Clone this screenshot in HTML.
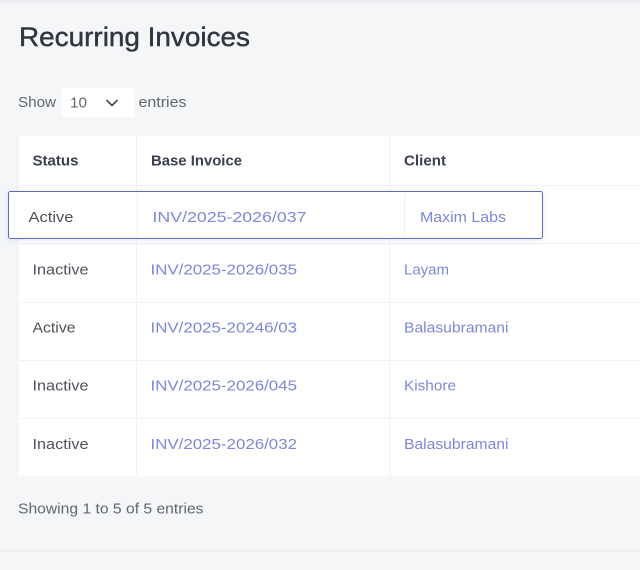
<!DOCTYPE html>
<html lang="en">
<head>
<meta charset="utf-8">
<title>Recurring Invoices</title>
<style>
html,body{margin:0;padding:0;width:640px;height:570px;overflow:hidden;background:#f4f6f8}
svg{display:block}
text{font-family:"Liberation Sans",sans-serif;font-size:15px;fill:#4a4f58}
.h{font-weight:700;fill:#3a404c}
.l{fill:#7d88d6}
.d{fill:#4d5159}
.m{fill:#62676f}
</style>
</head>
<body>
<svg width="640" height="570" viewBox="0 0 640 570" xmlns="http://www.w3.org/2000/svg">
<defs>
<linearGradient id="t" x1="0" y1="0" x2="0" y2="1"><stop offset="0" stop-color="#e6e8eb"/><stop offset="1" stop-color="#f4f6f8"/></linearGradient>
<filter id="s" x="-5%" y="-30%" width="110%" height="160%"><feDropShadow dx="0" dy="1" stdDeviation="3" flood-color="#5a6bbf" flood-opacity=".16"/></filter>
</defs>
<rect width="640" height="570" fill="#f4f6f8"/>
<rect width="640" height="4" fill="url(#t)"/>
<text x="19" y="46" textLength="231" lengthAdjust="spacingAndGlyphs" style="font-size:27px;fill:#2f3743;stroke:#2f3743;stroke-width:.45">Recurring Invoices</text>

<text x="18" y="107" class="m" textLength="38" lengthAdjust="spacingAndGlyphs">Show</text>
<rect x="61.500" y="88" width="72.500" height="29.500" rx="3" fill="#fff"/>
<text x="70" y="107.500" class="m" textLength="17" lengthAdjust="spacingAndGlyphs">10</text>
<path d="M106.500 100 L112 105.500 L117.500 100" fill="none" stroke="#4a4f58" stroke-width="1.800"/>
<text x="138.500" y="107" class="m" textLength="48" lengthAdjust="spacingAndGlyphs">entries</text>

<rect x="19" y="136" width="621" height="340.500" fill="#fff"/>
<g stroke="#f1f2f4" stroke-width="1" fill="none">
<path d="M136.500 136V476M390 136V476"/>
<path d="M19 185.500H640M19 243.500H640M19 302.500H640M19 360.500H640M19 418.500H640"/>
</g>

<text x="32.500" y="165.500" class="h" textLength="46" lengthAdjust="spacingAndGlyphs">Status</text>
<text x="151" y="165.500" class="h" textLength="91" lengthAdjust="spacingAndGlyphs">Base Invoice</text>
<text x="404" y="165.500" class="h" textLength="42" lengthAdjust="spacingAndGlyphs">Client</text>

<rect x="8.500" y="191.500" width="534" height="47" rx="2" fill="#fff" stroke="#5d6dbd" stroke-width="1" filter="url(#s)"/>
<path d="M137 192.500V238M404.500 192.500V238" stroke="#f1f2f4" stroke-width="1"/>
<text x="28.500" y="222" class="d" textLength="45" lengthAdjust="spacingAndGlyphs">Active</text>
<text x="152.500" y="222" class="l" textLength="154" lengthAdjust="spacingAndGlyphs">INV/2025-2026/037</text>
<text x="420" y="222" class="l" textLength="86" lengthAdjust="spacingAndGlyphs">Maxim Labs</text>

<text x="32.500" y="274.500" class="d" textLength="56" lengthAdjust="spacingAndGlyphs">Inactive</text>
<text x="150.500" y="274.500" class="l" textLength="146.500" lengthAdjust="spacingAndGlyphs">INV/2025-2026/035</text>
<text x="404" y="274.500" class="l" textLength="45" lengthAdjust="spacingAndGlyphs">Layam</text>

<text x="32.500" y="332.500" class="d" textLength="43" lengthAdjust="spacingAndGlyphs">Active</text>
<text x="150.500" y="332.500" class="l" textLength="146.500" lengthAdjust="spacingAndGlyphs">INV/2025-20246/03</text>
<text x="404" y="332.500" class="l" textLength="104.500" lengthAdjust="spacingAndGlyphs">Balasubramani</text>

<text x="32.500" y="390.500" class="d" textLength="56" lengthAdjust="spacingAndGlyphs">Inactive</text>
<text x="150.500" y="390.500" class="l" textLength="146.500" lengthAdjust="spacingAndGlyphs">INV/2025-2026/045</text>
<text x="404" y="390.500" class="l" textLength="52" lengthAdjust="spacingAndGlyphs">Kishore</text>

<text x="32.500" y="449" class="d" textLength="56" lengthAdjust="spacingAndGlyphs">Inactive</text>
<text x="150.500" y="449" class="l" textLength="146.500" lengthAdjust="spacingAndGlyphs">INV/2025-2026/032</text>
<text x="404" y="449" class="l" textLength="104.500" lengthAdjust="spacingAndGlyphs">Balasubramani</text>

<text x="18" y="513.500" class="m" textLength="185.500" lengthAdjust="spacingAndGlyphs">Showing 1 to 5 of 5 entries</text>

<rect x="0" y="550" width="640" height="2" fill="#eceef0"/>
</svg>
</body>
</html>
